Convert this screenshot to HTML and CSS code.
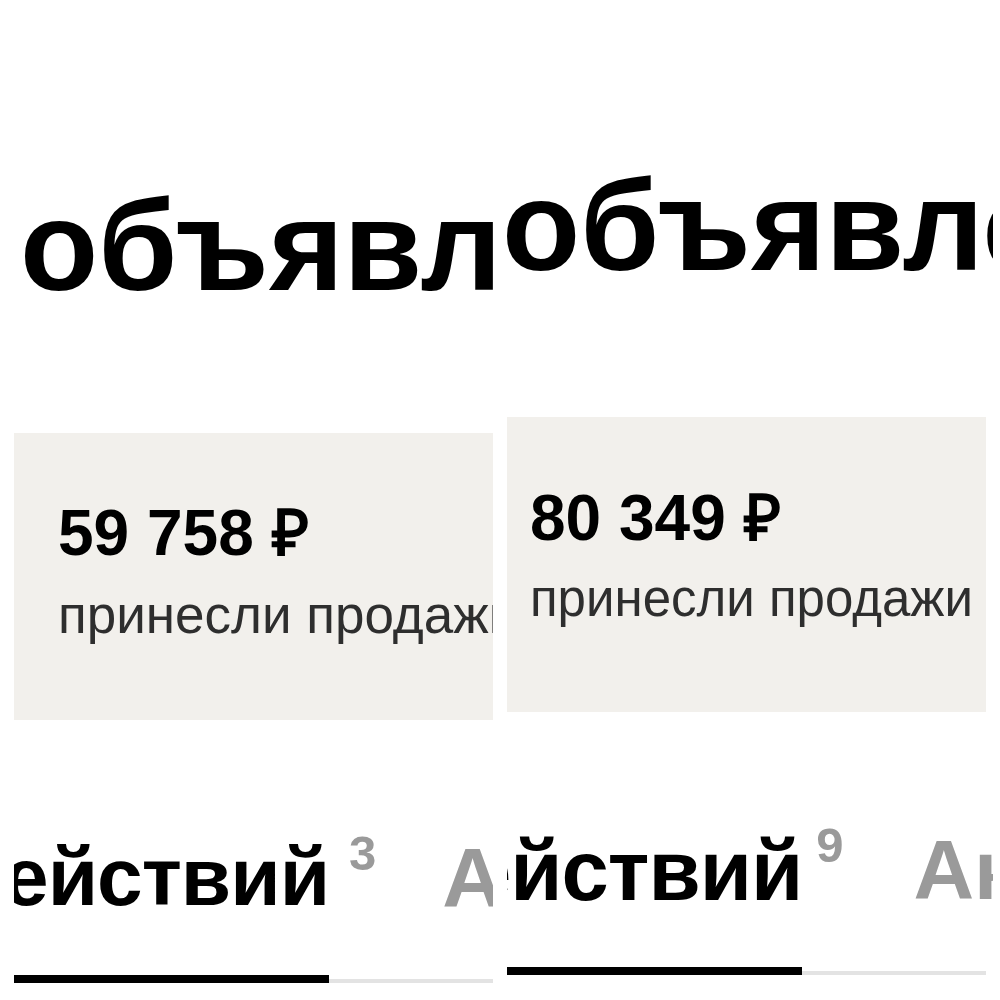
FILE: index.html
```html
<!DOCTYPE html>
<html lang="ru">
<head>
<meta charset="utf-8">
<title>Статистика объявлений</title>
<link rel="stylesheet" href="styles.css">
</head>
<body>
<div class="collage">
  <section class="panel panel-left">
    <h1 class="title">объявлений</h1>
    <div class="card">
      <div class="amount">59 758 ₽</div>
      <div class="caption">принесли продажи</div>
    </div>
    <div class="tabs">
      <div class="tab-label">действий</div>
      <sup class="count">3</sup>
      <div class="tab-next">Активные</div>
    </div>
  </section>
  <section class="panel panel-right">
    <h1 class="title">объявлений</h1>
    <div class="card">
      <div class="amount">80 349 ₽</div>
      <div class="caption">принесли продажи</div>
    </div>
    <div class="tabs">
      <div class="tab-label">действий</div>
      <sup class="count">9</sup>
      <div class="tab-next">Активные</div>
    </div>
  </section>
</div>
</body>
</html>
```
FILE: styles.css
```css
html, body {
  margin: 0;
  padding: 0;
  background: #ffffff;
}
body {
  font-family: "Liberation Sans", Arial, sans-serif;
  color: #000;
  width: 1000px;
  height: 1000px;
  overflow: hidden;
}
.collage {
  display: flex;
  gap: 14px;
  padding-left: 14px;
}
.panel {
  width: 479px;
  overflow: hidden;
  display: flex;
  flex-direction: column;
  flex: none;
}
.panel-right {
  width: 486px;
}
.panel-right .card,
.panel-right .tabs {
  margin-right: 7px;
}
.title {
  margin: 0;
  font-size: 128px;
  line-height: 1;
  font-weight: 700;
  white-space: nowrap;
}
.panel-left .title {
  margin-top: 182px;
  padding-left: 6px;
}
.panel-right .title {
  margin-top: 162px;
  margin-left: -5px;
}
.card {
  background: #f2f0ec;
  box-sizing: border-box;
}
.panel-left .card {
  margin-top: 123px;
  height: 287px;
  padding: 68px 0 0 44px;
}
.panel-right .card {
  margin-top: 127px;
  height: 295px;
  padding: 69px 0 0 23px;
}
.amount {
  font-size: 64px;
  line-height: 1;
  font-weight: 700;
  white-space: nowrap;
}
.caption {
  margin-top: 23px;
  font-size: 53px;
  line-height: 1;
  color: #2e2e2e;
  white-space: nowrap;
}
.panel-right .caption {
  font-size: 51px;
}
.tabs {
  display: flex;
  align-items: flex-start;
  border-bottom: 4px solid #e3e3e3;
  white-space: nowrap;
}
.panel-left .tabs {
  margin-top: 116px;
}
.panel-right .tabs {
  margin-top: 116px;
}
.tab-label {
  font-size: 82px;
  line-height: 1;
  font-weight: 700;
  letter-spacing: -1px;
  padding-bottom: 57px;
  border-bottom: 8px solid #000;
  margin-bottom: -4px;
}
.panel-left .tab-label {
  margin-left: -62px;
}
.panel-right .tab-label {
  font-size: 85px;
  margin-left: -96px;
  padding-bottom: 54px;
}
.count {
  font-size: 49px;
  line-height: 1;
  font-weight: 700;
  color: #9a9a9a;
  margin: -7px 0 0 20px;
}
.panel-right .count {
  margin-left: 14px;
}
.tab-next {
  font-size: 84px;
  line-height: 1;
  font-weight: 700;
  color: #9a9a9a;
  margin-left: 66px;
}
.panel-right .tab-next {
  margin-left: 70px;
}
```
